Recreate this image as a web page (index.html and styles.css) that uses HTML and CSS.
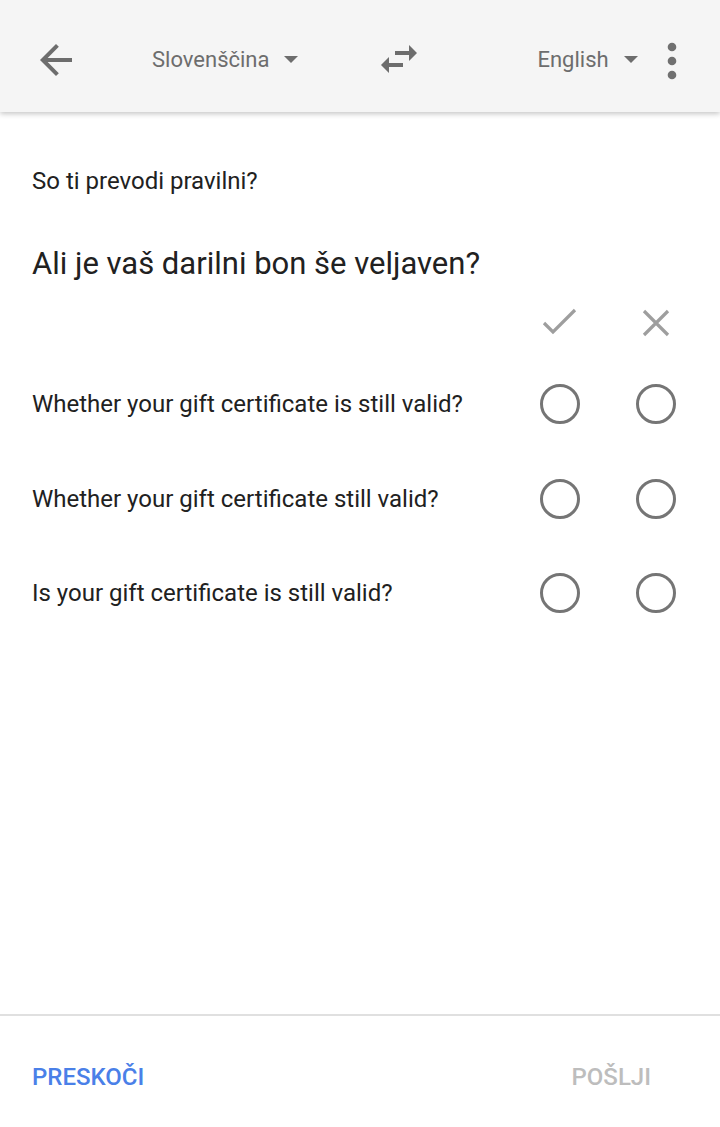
FILE: index.html
```html
<!DOCTYPE html>
<html lang="sl">
<head>
<meta charset="utf-8">
<link rel="stylesheet" href="styles.css">
</head>
<body>
<div class="app">
  <header class="toolbar">
    <svg class="icon back" viewBox="0 0 24 24" width="48" height="48"><path d="M20 11H7.83l5.59-5.59L12 4l-8 8 8 8 1.41-1.41L7.83 13H20v-2z"/></svg>
    <div class="lang src"><span>Slovenščina</span><i class="caret"></i></div>
    <svg class="icon swap" viewBox="0 0 24 24" width="48" height="48"><path d="M6.99 11L3 15l3.99 4v-3H14v-2H6.99v-3zM21 9l-3.99-4v3H10v2h7.01v3L21 9z"/></svg>
    <div class="lang dst"><span>English</span><i class="caret"></i></div>
    <svg class="icon more" viewBox="0 0 16 40" width="16" height="40"><circle cx="8" cy="6" r="4.3"/><circle cx="8" cy="20" r="4.3"/><circle cx="8" cy="34" r="4.3"/></svg>
  </header>

  <main class="content">
    <p class="prompt">So ti prevodi pravilni?</p>
    <h1 class="source">Ali je vaš darilni bon še veljaven?</h1>

    <div class="grid">
      <div class="head-row">
        <span></span>
        <svg class="mark" viewBox="0 0 40 30" width="40" height="30"><path d="M4 15 L13 24 L35 2" fill="none" stroke="#9e9e9e" stroke-width="3.2"/></svg>
        <svg class="mark" viewBox="0 0 30 30" width="30" height="30"><path d="M3 3 L27 27 M27 3 L3 27" fill="none" stroke="#9e9e9e" stroke-width="3.2"/></svg>
      </div>
      <div class="row">
        <span class="opt">Whether your gift certificate is still valid?</span>
        <span class="radio"></span><span class="radio"></span>
      </div>
      <div class="row">
        <span class="opt">Whether your gift certificate still valid?</span>
        <span class="radio"></span><span class="radio"></span>
      </div>
      <div class="row">
        <span class="opt">Is your gift certificate is still valid?</span>
        <span class="radio"></span><span class="radio"></span>
      </div>
    </div>
  </main>

  <footer class="actions">
    <span class="btn skip">PRESKOČI</span>
    <span class="btn send">POŠLJI</span>
  </footer>
</div>
</body>
</html>
```
FILE: styles.css
```css
* { box-sizing: border-box; }
html, body { margin: 0; padding: 0; background: #fff; }
body { font-family: Roboto, "Noto Sans", sans-serif; color: #212121; }
.app { width: 720px; height: 1127px; display: flex; flex-direction: column; }

.toolbar {
  height: 112px;
  background: #f5f5f5;
  box-shadow: 0 2px 5px rgba(0,0,0,0.22);
  display: flex;
  align-items: center;
  padding: 6px 0 0 32px;
  position: relative;
  z-index: 1;
}
.icon { fill: #6d6d6d; flex: none; }
.back { margin-top: 2px; }
.lang { display: flex; align-items: center; color: #6d6d6d; font-size: 22px; }
.caret { display: block; width: 0; height: 0; border-left: 7px solid transparent; border-right: 7px solid transparent; border-top: 7px solid #6d6d6d; margin-left: 15px; }
.src { margin-left: 72px; }
.swap { margin-left: 77px; }
.dst { margin-left: 114px; }
.more { margin-left: 26px; fill: #707070; margin-top: 4px; }

.content { flex: 1; padding: 0 16px 0 32px; }
.prompt { margin: 53px 0 0; font-size: 24px; line-height: 32px; }
.source { margin: 47px 0 0; font-size: 31px; font-weight: 400; line-height: 40px; }

.grid { margin-top: 0; }
.head-row, .row { display: grid; grid-template-columns: 1fr 96px 96px; align-items: center; justify-items: center; }
.head-row { height: 73px; }
.head-row span { justify-self: start; }
.head-row .mark { margin-top: 4px; }
.row { height: 94.5px; }
.opt { justify-self: start; font-size: 24px; }
.radio { width: 40px; height: 40px; border: 3px solid #757575; border-radius: 50%; }

.actions {
  border-top: 2px solid #e0e0e0;
  height: 113px;
  display: flex;
  justify-content: space-between;
  align-items: center;
  padding: 10px 69px 0 32px;
}
.btn { font-size: 24px; font-weight: 500; }
.skip { color: #4a80e8; }
.send { color: #bdbdbd; }
```
